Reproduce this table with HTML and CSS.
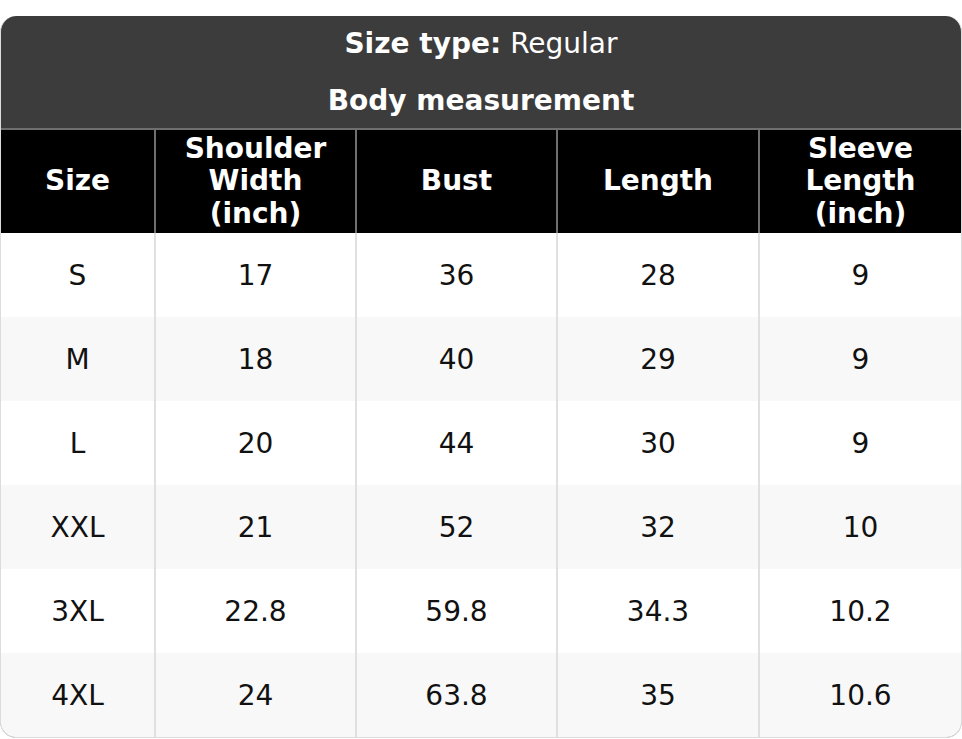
FILE: index.html
```html
<!DOCTYPE html>
<html>
<head>
<meta charset="utf-8">
<link rel="stylesheet" href="styles.css">
</head>
<body>
<div class="chart">
  <div class="title-row"><b>Size type:</b> Regular</div>
  <div class="title-row"><b>Body measurement</b></div>
  <table class="size-table">
    <colgroup>
      <col class="c1"><col class="c2"><col class="c3"><col class="c4"><col class="c5">
    </colgroup>
    <thead>
      <tr>
        <th>Size</th>
        <th>Shoulder<br>Width<br>(inch)</th>
        <th>Bust</th>
        <th>Length</th>
        <th>Sleeve<br>Length<br>(inch)</th>
      </tr>
    </thead>
    <tbody>
      <tr><td>S</td><td>17</td><td>36</td><td>28</td><td>9</td></tr>
      <tr><td>M</td><td>18</td><td>40</td><td>29</td><td>9</td></tr>
      <tr><td>L</td><td>20</td><td>44</td><td>30</td><td>9</td></tr>
      <tr><td>XXL</td><td>21</td><td>52</td><td>32</td><td>10</td></tr>
      <tr><td>3XL</td><td>22.8</td><td>59.8</td><td>34.3</td><td>10.2</td></tr>
      <tr><td>4XL</td><td>24</td><td>63.8</td><td>35</td><td>10.6</td></tr>
    </tbody>
  </table>
</div>
</body>
</html>
```
FILE: styles.css
```css
html, body {
  margin: 0;
  padding: 0;
  background: #ffffff;
}
body {
  padding-top: 16px;
  font-family: "DejaVu Sans", "Liberation Sans", sans-serif;
  font-size: 28px;
  color: #111;
}
.chart {
  width: 962px;
  box-sizing: border-box;
  border: 1px solid #dcdcdc;
  border-top: none;
  border-radius: 16px;
  overflow: hidden;
  background: #3c3c3c;
}
.title-row {
  height: 56px;
  display: flex;
  align-items: center;
  justify-content: center;
  color: #fff;
  font-weight: normal;
}
.title-row:first-child { padding-bottom: 1px; height: 55px; }
.title-row b {
  font-weight: bold;
  margin-right: 9px;
}
.title-row:last-of-type b { margin-right: 0; }
.size-table {
  width: 960px;
  table-layout: fixed;
  border-collapse: collapse;
  background: #fff;
}
.c1 { width: 154px; }
.c2 { width: 201px; }
.c3 { width: 201px; }
.c4 { width: 202px; }
.c5 { width: 202px; }
th {
  background: #000;
  color: #fff;
  font-weight: bold;
  height: 103px;
  padding: 0;
  border-top: 2px solid #6f6f6f;
  border-left: 2px solid #6f6f6f;
  line-height: 32.5px;
}
th:first-child { border-left: none; }
td {
  height: 84px;
  padding: 0;
  text-align: center;
  border-left: 2px solid #e0e0e0;
}
td:first-child { border-left: none; }
tbody tr:nth-child(even) td { background: #f8f8f8; }
```
